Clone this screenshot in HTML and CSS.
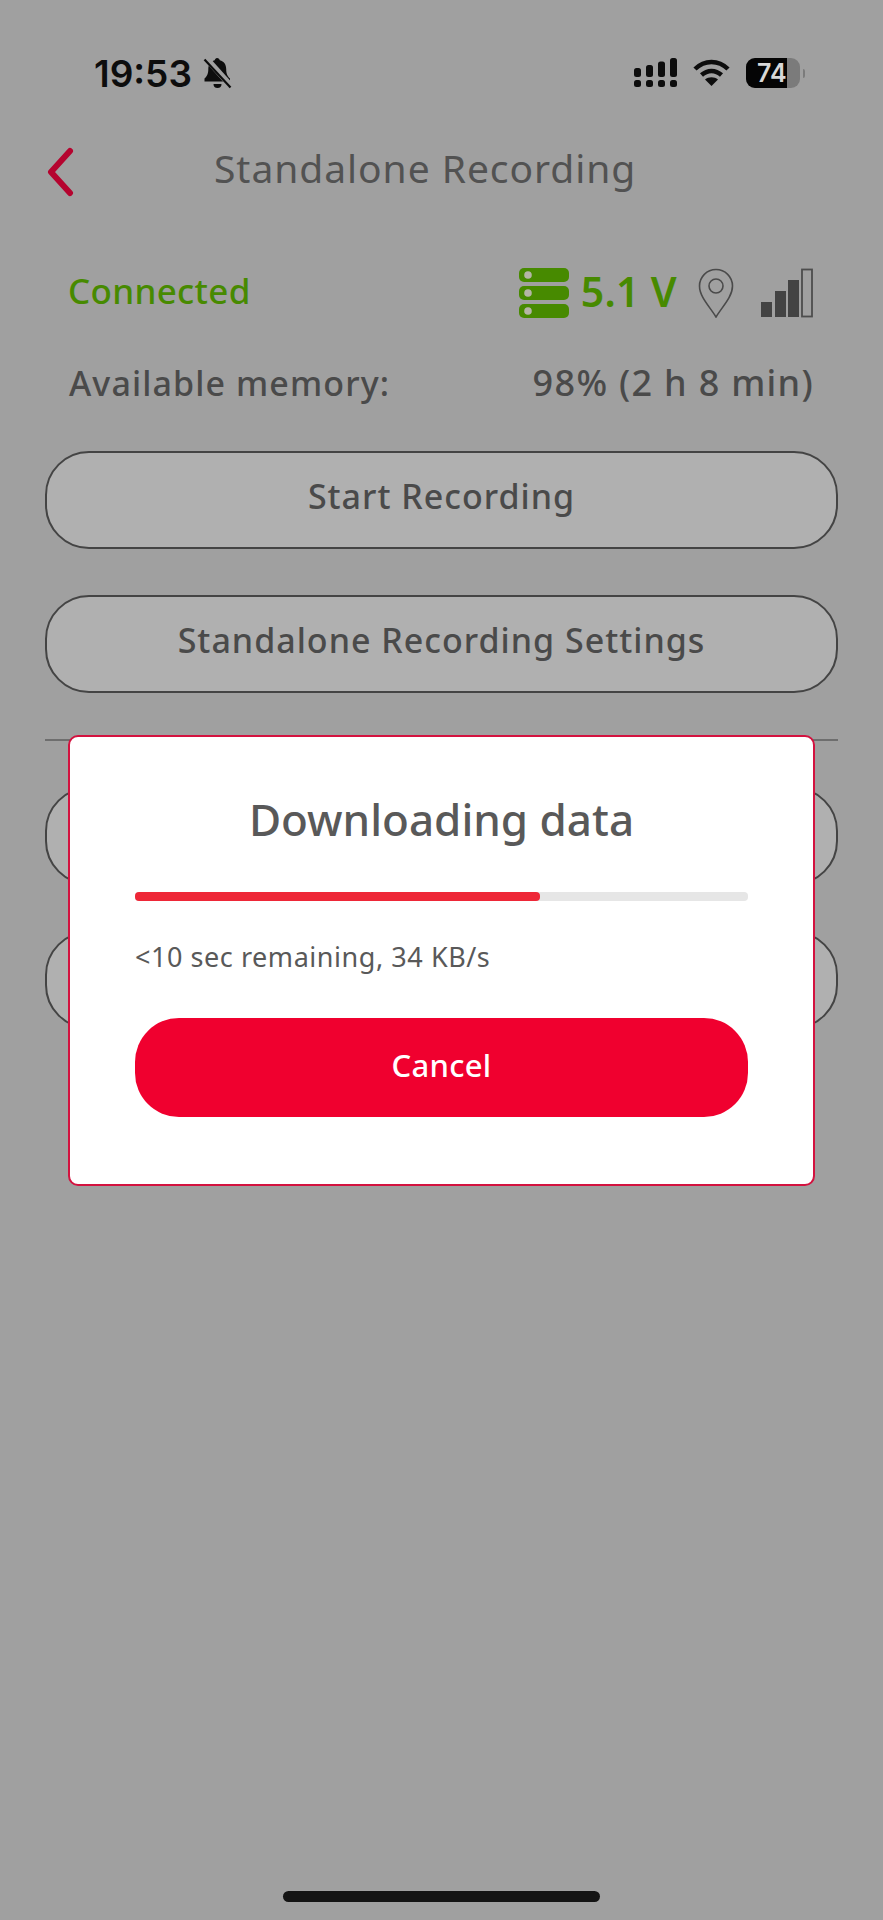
FILE: index.html
```html
<!DOCTYPE html>
<html>
<head>
  <meta charset="utf-8" />
  <title>Standalone Recording</title>
  <link rel="stylesheet" href="styles.css">
</head>
<body>
  <div class="statusbar">
    <div class="clock">
      <span class="time">19:53</span>
      <svg class="bell" width="31" height="32" viewBox="0 0 31 32">
        <path d="M15 1c1.600 0 2.600 1 2.800 2.300 4.200 1 6.400 4.400 6.400 8.700 0 5 1.300 7.300 3.800 9.500v3H2.500v-3c2.500-2.200 3.800-4.500 3.800-9.500 0-4.300 2.200-7.700 6.400-8.700C12.900 2 13.900 1 15 1z" fill="#0d0d0d"/>
        <path d="M11.500 27h8a4 4 0 0 1-8 0z" fill="#0d0d0d"/>
        <path d="M3 0l26 29" stroke="#a0a0a0" stroke-width="6"/>
        <path d="M2.500 2.500l26 28" stroke="#0d0d0d" stroke-width="2.200"/>
      </svg>
    </div>
    <div class="indicators">
      <svg width="43" height="30" viewBox="0 0 43 30" fill="#0d0d0d">
        <rect x="0" y="10" width="7" height="9" rx="2.500"/><rect x="12" y="7" width="7" height="12" rx="2.500"/>
        <rect x="24" y="3.500" width="7" height="15.500" rx="2.500"/><rect x="36" y="0" width="7" height="19" rx="2.500"/>
        <rect x="0" y="22" width="7" height="7" rx="2.500"/><rect x="12" y="22" width="7" height="7" rx="2.500"/>
        <rect x="24" y="22" width="7" height="7" rx="2.500"/><rect x="36" y="22" width="7" height="7" rx="2.500"/>
      </svg>
      <svg width="37" height="28" viewBox="0 0 37 28" fill="none" stroke="#0d0d0d" stroke-width="4.500">
        <path d="M2 10c9.500-9.500 23.500-9.500 33 0"/>
        <path d="M8.500 16c6-5.500 14-5.500 20 0"/>
        <path d="M18.500 27l-6.500-6.500c3.500-3 9.500-3 13 0z" fill="#0d0d0d" stroke="none"/>
      </svg>
      <div class="batterywrap">
        <div class="battery"><div class="batteryfill"><span>74</span></div></div>
        <div class="batterycap"></div>
      </div>
    </div>
  </div>

  <div class="header">
    <svg class="back" width="30" height="50" viewBox="0 0 30 50" fill="none">
      <path d="M24 4L5 25 24 46" stroke="#b5042f" stroke-width="6" stroke-linecap="round" stroke-linejoin="round"/>
    </svg>
    <span class="title">Standalone Recording</span>
  </div>

  <div class="inforow">
    <span class="connected">Connected</span>
    <div class="stats">
      <svg width="50" height="50" viewBox="0 0 50 50">
        <rect x="0" y="0" width="50" height="14" rx="5" fill="#478a00"/><circle cx="9" cy="7" r="3.800" fill="#b5b5a5"/>
        <rect x="0" y="18" width="50" height="14" rx="5" fill="#478a00"/><circle cx="9" cy="25" r="3.800" fill="#b5b5a5"/>
        <rect x="0" y="36" width="50" height="14" rx="5" fill="#478a00"/><circle cx="9" cy="43" r="3.800" fill="#b5b5a5"/>
      </svg>
      <span class="volts">5.1 V</span>
      <svg class="pin" width="36" height="50" viewBox="0 0 36 50" fill="none" stroke="#4a4a4a" stroke-width="1.600">
        <path d="M18 49C12 39 1.500 29 1.500 18a16.500 16.500 0 0 1 33 0C34.500 29 24 39 18 49z"/>
        <circle cx="18" cy="18" r="7"/>
      </svg>
      <svg class="signal" width="52" height="50" viewBox="0 0 52 50">
        <rect x="0" y="34" width="11" height="15" fill="#434343"/>
        <rect x="14" y="23" width="11" height="26" fill="#434343"/>
        <rect x="27" y="12" width="11" height="37" fill="#434343"/>
        <rect x="41" y="1.500" width="10" height="47" fill="none" stroke="#4d4d4d" stroke-width="1.800"/>
      </svg>
    </div>
  </div>

  <div class="memrow">
    <span>Available memory:</span>
    <span class="memval">98% (2 h 8 min)</span>
  </div>

  <div class="actions">
    <div class="btn">Start Recording</div>
    <div class="btn">Standalone Recording Settings</div>
    <div class="divider"></div>
    <div class="btn"></div>
    <div class="btn"></div>
  </div>

  <div class="dialog">
    <h2 class="dialogtitle">Downloading data</h2>
    <div class="track"><div class="trackfill"></div></div>
    <p class="remaining">&lt;10 sec remaining, 34 KB/s</p>
    <div class="cancel">Cancel</div>
  </div>

  <div class="homebar"></div>
</body>
</html>
```

FILE: styles.css
```css
html, body
{
  margin: 0;
  padding: 0;
}

body
{
  position: relative;
  height: 1920px;
  overflow: hidden;
  background-color: #a0a0a0;
  color: #4a4a4a;
  font-family: "Noto Sans", Lato, sans-serif;
}

.statusbar
{
  display: flex;
  justify-content: space-between;
  align-items: center;
  height: 50px;
  padding: 48px 78px 0 94px;
}

.clock
{
  display: flex;
  align-items: center;
  gap: 10px;
}

.time
{
  font-family: Inter, "Liberation Sans", sans-serif;
  font-size: 37px;
  font-weight: 600;
  color: #0d0d0d;
}

.indicators
{
  display: flex;
  align-items: center;
  gap: 16px;
}

.batterywrap
{
  display: flex;
  align-items: center;
  gap: 3px;
}

.battery
{
  width: 54px;
  height: 30px;
  border-radius: 9px;
  overflow: hidden;
  background-color: #7b7b7b;
}

.batteryfill
{
  width: 41px;
  height: 30px;
  padding-left: 11px;
  box-sizing: border-box;
  background-color: #050505;
  color: #d8d8d8;
  font-family: Inter, "Liberation Sans", sans-serif;
  font-size: 25px;
  font-weight: 600;
  line-height: 30px;
  white-space: nowrap;
}

.batterycap
{
  width: 2px;
  height: 9px;
  border-radius: 0 3px 3px 0;
  background-color: #7b7b7b;
}

.header
{
  display: flex;
  align-items: center;
  height: 50px;
  margin-top: 45px;
  padding-left: 46px;
}

.back
{
  margin-top: 8px;
}

.title
{
  margin-left: 138px;
  padding-bottom: 2px;
  font-size: 39px;
  letter-spacing: 0.95px;
  color: #525252;
}

.inforow
{
  display: flex;
  justify-content: space-between;
  align-items: center;
  height: 52px;
  margin-top: 74px;
  padding: 0 70px 0 68px;
}

.connected
{
  padding-bottom: 6px;
  font-size: 35px;
  font-weight: 500;
  letter-spacing: 0.3px;
  color: #478a00;
}

.stats
{
  display: flex;
  align-items: center;
}

.volts
{
  margin-left: 12px;
  padding-bottom: 4px;
  font-size: 41px;
  font-weight: 600;
  letter-spacing: 0.3px;
  color: #478a00;
}

.pin
{
  margin-left: 21px;
}

.signal
{
  margin-left: 27px;
}

.memrow
{
  display: flex;
  justify-content: space-between;
  margin-top: 39px;
  padding: 0 69px;
  font-size: 34px;
  font-weight: 500;
  letter-spacing: 1.1px;
  line-height: 50px;
}

.memval
{
  font-size: 36px;
  letter-spacing: 1.3px;
}

.actions
{
  margin: 43px 45px 0 45px;
}

.btn
{
  height: 94px;
  margin-bottom: 46px;
  border: 2px solid #444;
  border-radius: 44px;
  background-color: #b0b0b0;
  text-align: center;
  font-size: 34px;
  font-weight: 500;
  letter-spacing: 1px;
  line-height: 86px;
}

.divider
{
  height: 2px;
  margin: 0 0 46px 0;
  background-color: #6e6e6e;
}

.dialog
{
  position: absolute;
  left: 68px;
  top: 735px;
  box-sizing: border-box;
  width: 747px;
  height: 451px;
  padding: 0 65px;
  border: 2px solid #d3123f;
  border-radius: 10px;
  background-color: #fff;
}

.dialogtitle
{
  margin: 52px 0 0 0;
  text-align: center;
  font-size: 44px;
  font-weight: 500;
  line-height: 60px;
  color: #595959;
}

.track
{
  height: 9px;
  margin-top: 43px;
  border-radius: 4px;
  background-color: #e6e6e6;
}

.trackfill
{
  width: 66%;
  height: 9px;
  border-radius: 4px;
  background-color: #ee2737;
}

.remaining
{
  margin: 36px 0 0 0;
  font-size: 27px;
  letter-spacing: 0.55px;
  line-height: 40px;
  color: #595959;
}

.cancel
{
  height: 99px;
  margin-top: 41px;
  border-radius: 44px;
  background-color: #f0002f;
  color: #fff;
  text-align: center;
  font-size: 31px;
  font-weight: 500;
  letter-spacing: 0.3px;
  line-height: 95px;
}

.homebar
{
  position: absolute;
  left: 283px;
  top: 1891px;
  width: 317px;
  height: 11px;
  border-radius: 6px;
  background-color: #141414;
}
```
